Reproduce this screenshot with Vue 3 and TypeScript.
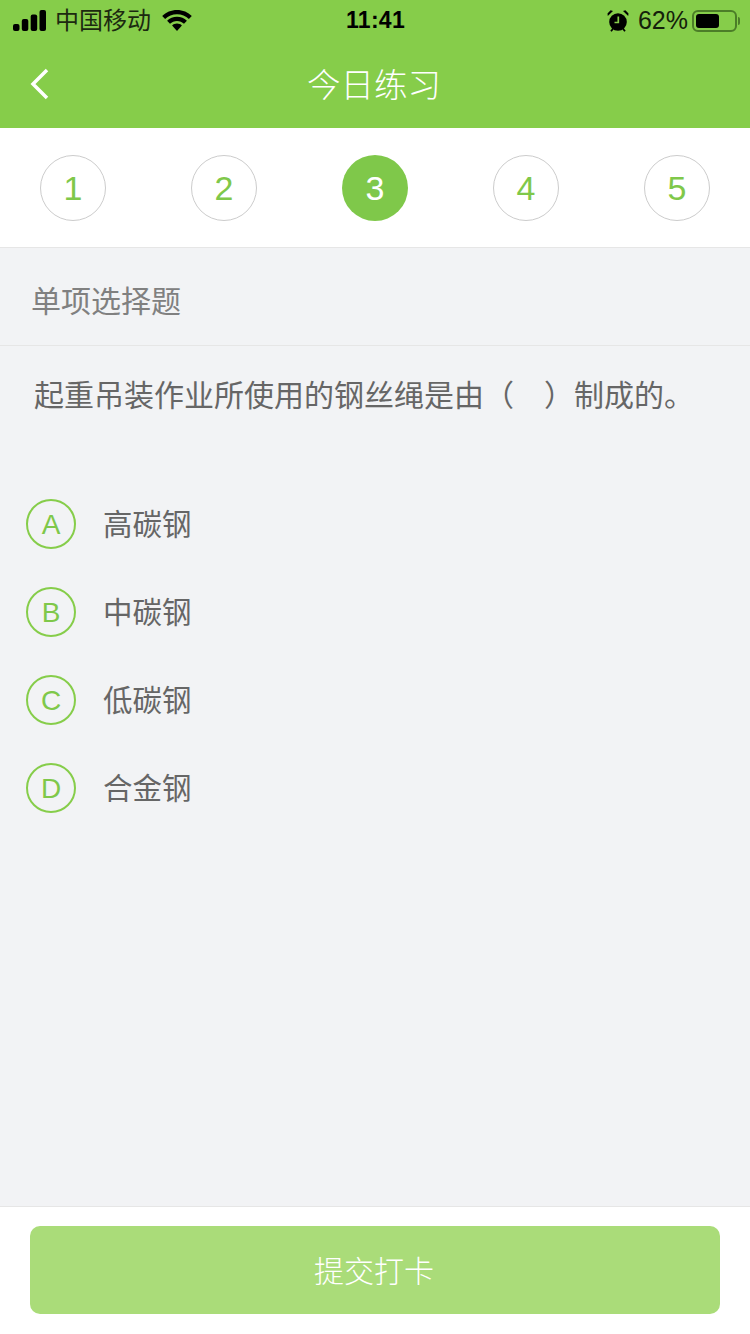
<script setup lang="ts">
import { ref } from "vue";

const steps = [1, 2, 3, 4, 5];
const current = ref(3);
const options = [
  { key: "A", label: "高碳钢" },
  { key: "B", label: "中碳钢" },
  { key: "C", label: "低碳钢" },
  { key: "D", label: "合金钢" },
];
</script>

<template>
  <main class="page">
    <header class="top">
      <div class="status">
        <div class="status-side">
          <svg class="signal" width="33" height="21" viewBox="0 0 33 21">
            <rect x="0" y="14" width="6.500" height="7" rx="2" />
            <rect x="8.800" y="9" width="6.500" height="12" rx="2" />
            <rect x="17.700" y="4.500" width="6.500" height="16.500" rx="2" />
            <rect x="26.500" y="0" width="6.500" height="21" rx="2" />
          </svg>
          <span class="carrier">中国移动</span>
          <svg class="wifi" width="30" height="21" viewBox="0 0 30 21">
            <path d="M15 0C9.200 0 4 2.300.2 6l2.900 3C6.200 6 10.400 4.200 15 4.200S23.800 6 26.900 9l2.900-3C26 2.300 20.800 0 15 0z" />
            <path d="M15 6.800c-3.800 0-7.300 1.500-9.900 4l2.900 3c1.800-1.700 4.300-2.800 7-2.800s5.200 1.100 7 2.800l2.900-3C22.300 8.300 18.800 6.800 15 6.800z" />
            <path d="M15 13.500c-1.900 0-3.600.7-4.900 1.900L15 21l4.900-5.600c-1.300-1.200-3-1.900-4.900-1.900z" />
          </svg>
        </div>
        <span class="time">11:41</span>
        <div class="status-side status-right">
          <svg class="alarm" width="22" height="22" viewBox="0 0 22 22">
            <circle cx="11" cy="12" r="8.800" />
            <path d="M.8 6 6 .9 3.600.3.500 3.400zM21.200 6 16 .9 18.400.3 21.500 3.400z" />
            <path d="M4 21.300 6 18.800M18 21.300 16 18.800" stroke="#000" stroke-width="1.800" />
            <path d="M11.300 6.500V12.500H7.500" fill="none" stroke="#86cd4a" stroke-width="1.700" />
          </svg>
          <span class="percent">62%</span>
          <div class="battery">
            <div class="battery-level"></div>
          </div>
          <div class="battery-cap"></div>
        </div>
      </div>
      <div class="nav">
        <svg class="back" width="20" height="32" viewBox="0 0 20 32">
          <path d="M17 2 3 16l14 14" fill="none" stroke="#fff" stroke-width="3.500" />
        </svg>
        <h1 class="title">今日练习</h1>
      </div>
    </header>

    <section class="steps">
      <div
        v-for="step in steps"
        :key="step"
        class="step"
        :class="{ active: step === current }"
      >
        {{ step }}
      </div>
    </section>

    <div class="type">单项选择题</div>

    <section class="content">
      <p class="question">起重吊装作业所使用的钢丝绳是由（&emsp;）制成的。</p>
      <ul class="options">
        <li v-for="item in options" :key="item.key" class="option">
          <span class="option-key">{{ item.key }}</span>
          <span class="option-label">{{ item.label }}</span>
        </li>
      </ul>
    </section>

    <footer class="bottom">
      <button class="submit" type="button">提交打卡</button>
    </footer>
  </main>
</template>

<style scoped>
.page {
  width: 750px;
  height: 1334px;
  display: flex;
  flex-direction: column;
  overflow: hidden;
  background-color: #f2f3f5;
  font-family: "Liberation Sans", "Noto Sans CJK SC", sans-serif;
}

.top {
  height: 128px;
  flex-shrink: 0;
  background-color: #86cd4a;
}

.status {
  height: 40px;
  padding: 1px 10px 0 13px;
  box-sizing: border-box;
  display: flex;
  align-items: center;
  color: #000;
}

.status-side {
  flex: 1;
  display: flex;
  align-items: center;
}

.status-right {
  justify-content: flex-end;
}

.signal {
  margin-right: 9px;
}

.carrier {
  font-size: 24px;
  line-height: 38px;
  color: #1c2a10;
}

.wifi {
  margin-left: 11px;
}

.time {
  font-size: 23px;
  font-weight: 700;
  letter-spacing: 0.3px;
  margin-right: 2px;
}

.alarm {
  margin-right: 9px;
}

.percent {
  font-size: 25px;
  margin-right: 4px;
  color: #14200a;
}

.battery {
  width: 45px;
  height: 22px;
  box-sizing: border-box;
  border: 2px solid #4c7d28;
  border-radius: 6px;
  padding: 2px;
}

.battery-level {
  width: 62%;
  height: 100%;
  background-color: #000;
  border-radius: 3px;
}

.battery-cap {
  width: 2px;
  height: 8px;
  margin-left: 1px;
  background-color: #4c7d28;
  border-radius: 0 2px 2px 0;
}

.nav {
  height: 88px;
  padding-left: 30px;
  display: flex;
  align-items: center;
  position: relative;
}

.back {
  margin-top: -1px;
}

.title {
  position: absolute;
  left: 0;
  right: 2px;
  margin: 0;
  padding-bottom: 4px;
  text-align: center;
  font-size: 33.500px;
  font-weight: 300;
  color: #fff;
}

.steps {
  height: 119px;
  box-sizing: content-box;
  flex-shrink: 0;
  padding: 0 40px;
  display: flex;
  align-items: center;
  justify-content: space-between;
  background-color: #fff;
  border-bottom: 1px solid #e6e6e6;
}

.step {
  width: 66px;
  height: 66px;
  box-sizing: border-box;
  padding-top: 2px;
  border: 1px solid #cccccc;
  border-radius: 50%;
  display: flex;
  align-items: center;
  justify-content: center;
  font-size: 34px;
  color: #7fc84a;
}

.step.active {
  border: none;
  background-color: #7fc84a;
  color: #fff;
}

.type {
  height: 98px;
  flex-shrink: 0;
  box-sizing: border-box;
  padding: 4px 31px 0;
  display: flex;
  align-items: center;
  font-size: 30px;
  color: #808080;
  border-bottom: 1px solid #e6e6e6;
}

.content {
  flex: 1;
  padding-top: 30px;
}

.question {
  margin: 0;
  padding-left: 34px;
  font-size: 30px;
  line-height: 40px;
  color: #666;
}

.options {
  list-style: none;
  margin: 83px 0 0;
  padding: 0 0 0 26px;
  display: flex;
  flex-direction: column;
  gap: 38px;
}

.option {
  display: flex;
  align-items: center;
  height: 50px;
}

.option-key {
  width: 50px;
  height: 50px;
  box-sizing: border-box;
  padding-top: 2px;
  border: 2px solid #86cd4a;
  border-radius: 50%;
  display: flex;
  align-items: center;
  justify-content: center;
  font-size: 28px;
  color: #7fc84a;
}

.option-label {
  margin-left: 27px;
  margin-bottom: 4px;
  font-size: 29.500px;
  color: #666;
}

.bottom {
  height: 128px;
  flex-shrink: 0;
  padding: 19px 30px 0;
  box-sizing: border-box;
  background-color: #fff;
  border-top: 1px solid #e6e6e6;
}

.submit {
  display: block;
  width: 100%;
  height: 88px;
  padding: 0 2px 3px 0;
  border: none;
  border-radius: 10px;
  background-color: #aadc79;
  color: #fff;
  font-family: inherit;
  font-size: 30px;
  font-weight: 300;
}
</style>
